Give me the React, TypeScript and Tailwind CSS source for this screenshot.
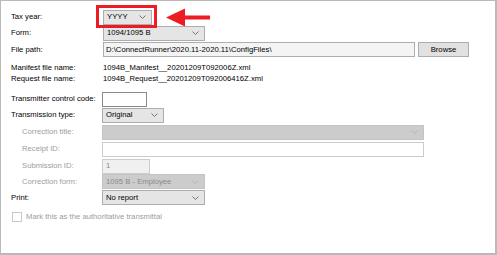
import React from "react";

const font = { fontFamily: '"Liberation Sans", Arial, sans-serif' };

function Chevron({ color = "#555" }: { color?: string }) {
  return (
    <svg width="7" height="4" viewBox="0 0 7 4" className="shrink-0">
      <polyline points="0.5,0.5 3.5,3.5 6.5,0.5" fill="none" stroke={color} strokeWidth="0.9" />
    </svg>
  );
}

function Select({
  text,
  width,
  disabled = false,
}: {
  text: string;
  width: string;
  disabled?: boolean;
}) {
  return (
    <div
      className={
        "h-[15px] flex items-center justify-between pl-[3px] pr-[5px] border " +
        width +
        (disabled
          ? " bg-[#cccccc] border-[#c4c4c4] text-[#8a8a8a]"
          : " bg-[#e5e5e5] border-[#adadad] text-black")
      }
    >
      <span className="leading-none">{text}</span>
      <Chevron color={disabled ? "#b2b2b2" : "#666"} />
    </div>
  );
}

function Row({
  label,
  indent = false,
  disabled = false,
  h = "h-[16px]",
  children,
}: {
  label: string;
  indent?: boolean;
  disabled?: boolean;
  h?: string;
  children?: React.ReactNode;
}) {
  return (
    <div className={"flex items-center " + h}>
      <div
        className={
          "w-[91px] shrink-0 leading-none " +
          (indent ? "pl-[11px] " : "") +
          (disabled ? "text-[#9c9c9c]" : "text-black")
        }
      >
        {label}
      </div>
      {children}
    </div>
  );
}

export default function App() {
  return (
    <div
      className="w-[497px] h-[255px] bg-white border border-[#b9b9b9] border-r-2 border-b-2 text-[7.7px] overflow-hidden"
      style={font}
    >
      <div className="pl-[10px] pt-[8px] flex flex-col">
        {/* Tax year with callout */}
        <Row label="Tax year:">
          <div className="relative ml-px">
            <Select text="YYYY" width="w-[49px]" />
            <div className="absolute -left-[7px] -top-[5px] w-[61px] h-[23px] border-[3px] border-[#ec1c24]" />
            <svg
              className="absolute left-[63px] -top-[2px]"
              width="44"
              height="20"
              viewBox="0 0 44 20"
            >
              <polygon points="0,9.5 19,0.5 19,18.5" fill="#ec1c24" />
              <rect x="18" y="7.5" width="26" height="4" fill="#ec1c24" />
            </svg>
          </div>
        </Row>
        <Row label="Form:">
          <div className="ml-px">
            <Select text="1094/1095 B" width="w-[102px]" />
          </div>
        </Row>
        <Row label="File path:" h="h-[17px]">
          <div className="ml-px flex items-center gap-[3px]">
            <div className="h-[15px] w-[312px] flex items-center pl-[2px] border border-[#adadad] bg-[#f4f4f4] text-black leading-none">
              D:\ConnectRunner\2020.11-2020.11\ConfigFiles\
            </div>
            <div className="h-[15px] w-[51px] flex items-center justify-center border border-[#adadad] bg-[#e1e1e1] text-black leading-none">
              Browse
            </div>
          </div>
        </Row>
        <div className="mt-[4px]">
          <Row label="Manifest file name:" h="h-[11px]">
            <span className="ml-px leading-none text-black">1094B_Manifest__20201209T092006Z.xml</span>
          </Row>
          <Row label="Request file name:" h="h-[12px]">
            <span className="ml-px leading-none text-black">1094B_Request__20201209T092006416Z.xml</span>
          </Row>
        </div>
        <div className="mt-[6px] flex flex-col">
          <Row label="Transmitter control code:">
            <div className="h-[15px] w-[45px] border border-[#8a8a8a] bg-white" />
          </Row>
          <Row label="Transmission type:">
            <Select text="Original" width="w-[62px]" />
          </Row>
          <div className="mt-px">
            <Row label="Correction title:" indent disabled>
              <Select text="" width="w-[322px]" disabled />
            </Row>
          </div>
          <div className="mt-px">
            <Row label="Receipt ID:" indent disabled>
              <div className="h-[15px] w-[322px] border border-[#cccccc] bg-white" />
            </Row>
          </div>
          <div className="mt-px">
            <Row label="Submission ID:" indent disabled>
              <div className="h-[15px] w-[48px] flex items-center pl-[3px] border border-[#cccccc] bg-[#f0f0f0] text-[#8a8a8a] leading-none">
                1
              </div>
            </Row>
          </div>
          <Row label="Correction form:" indent disabled h="h-[15px]">
            <Select text="1095 B - Employee" width="w-[103px]" disabled />
          </Row>
          <Row label="Print:" h="h-[17px]">
            <Select text="No report" width="w-[103px]" />
          </Row>
          <div className="mt-[3px] h-[16px] flex items-center">
            <div className="w-[10px] h-[10px] ml-px border border-[#c8c8c8] bg-white shrink-0" />
            <span className="ml-[4px] leading-none text-[#9c9c9c]">
              Mark this as the authoritative transmittal
            </span>
          </div>
        </div>
      </div>
    </div>
  );
}
